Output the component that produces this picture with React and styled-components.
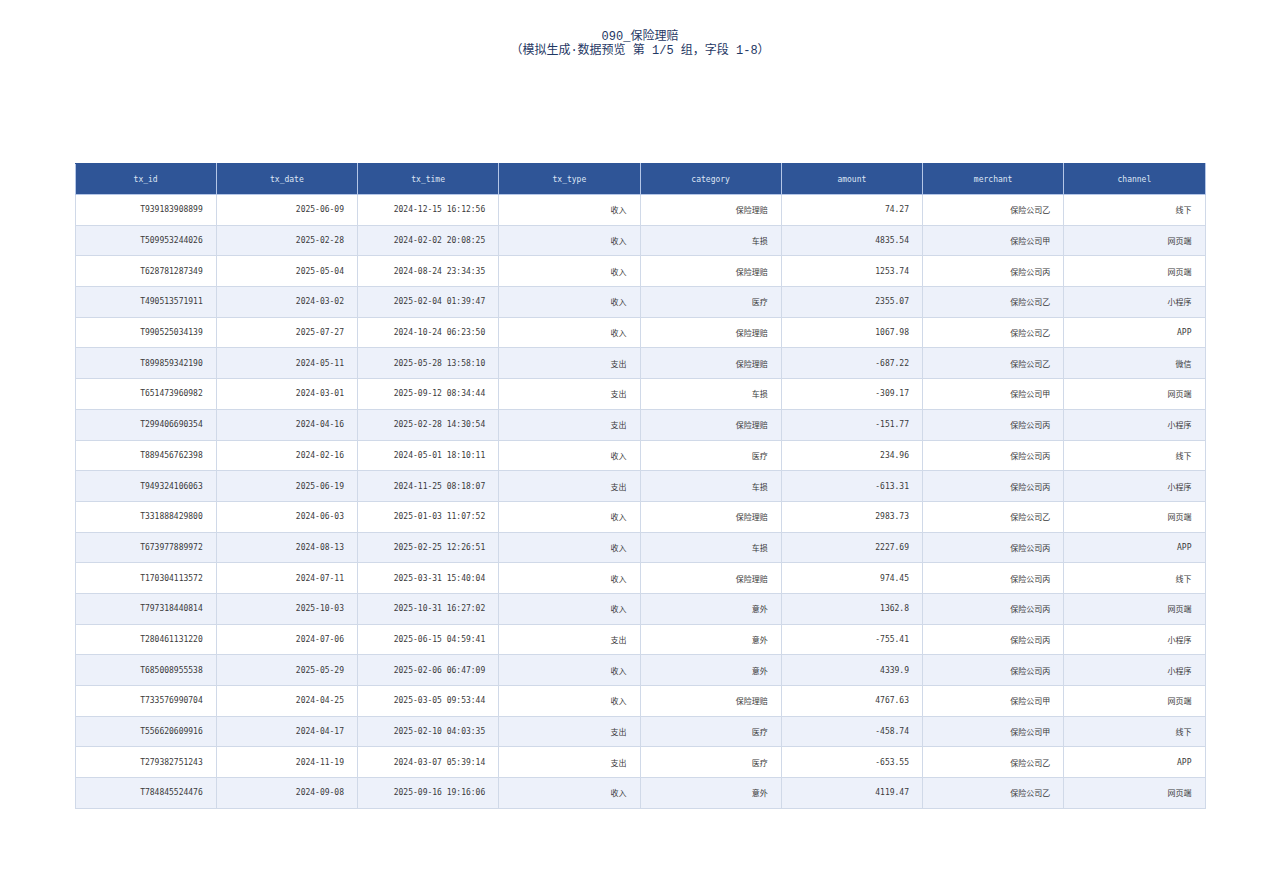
import React from "react";
import styled, { createGlobalStyle } from "styled-components";

const Global = createGlobalStyle`
  body {
    margin: 0;
    background: #ffffff;
    font-family: "DejaVu Sans Mono", "Noto Sans CJK SC", monospace;
  }
`;

const Page = styled.div`
  width: 1280px;
  height: 874px;
  padding: 30px 75px 0;
  box-sizing: border-box;
  display: flex;
  flex-direction: column;
  align-items: center;
`;

const Title = styled.div`
  color: #1f3864;
  font-size: 12px;
  line-height: 14px;
  text-align: center;
  font-family: "Liberation Mono", "Noto Sans CJK SC", monospace;
`;

const Table = styled.table`
  margin-top: 105px;
  width: 1131px;
  border-collapse: collapse;
  table-layout: fixed;
  font-size: 8px;
  color: #3a3a3a;
`;

const Th = styled.th`
  background: #2f5597;
  color: #dfe7f5;
  font-weight: normal;
  height: 30px;
  padding: 0;
  text-align: center;
  border: 1px solid #b4c6e7;
  border-top-color: #2f5597;
`;

const Tr = styled.tr`
  background: ${(p) => (p.$alt ? "#edf1fa" : "#ffffff")};
  height: 30.7px;
`;

const Td = styled.td`
  text-align: right;
  padding: 0 13px 0 0;
  border: 1px solid #d0d9e8;
`;

const cols = ["tx_id", "tx_date", "tx_time", "tx_type", "category", "amount", "merchant", "channel"];

const rows = [
  ["T939183908899", "2025-06-09", "2024-12-15 16:12:56", "收入", "保险理赔", "74.27", "保险公司乙", "线下"],
  ["T509953244026", "2025-02-28", "2024-02-02 20:08:25", "收入", "车损", "4835.54", "保险公司甲", "网页端"],
  ["T628781287349", "2025-05-04", "2024-08-24 23:34:35", "收入", "保险理赔", "1253.74", "保险公司丙", "网页端"],
  ["T490513571911", "2024-03-02", "2025-02-04 01:39:47", "收入", "医疗", "2355.07", "保险公司乙", "小程序"],
  ["T990525034139", "2025-07-27", "2024-10-24 06:23:50", "收入", "保险理赔", "1067.98", "保险公司乙", "APP"],
  ["T899859342190", "2024-05-11", "2025-05-28 13:58:10", "支出", "保险理赔", "-687.22", "保险公司乙", "微信"],
  ["T651473960982", "2024-03-01", "2025-09-12 08:34:44", "支出", "车损", "-309.17", "保险公司甲", "网页端"],
  ["T299406690354", "2024-04-16", "2025-02-28 14:30:54", "支出", "保险理赔", "-151.77", "保险公司丙", "小程序"],
  ["T889456762398", "2024-02-16", "2024-05-01 18:10:11", "收入", "医疗", "234.96", "保险公司丙", "线下"],
  ["T949324106063", "2025-06-19", "2024-11-25 08:18:07", "支出", "车损", "-613.31", "保险公司丙", "小程序"],
  ["T331888429800", "2024-06-03", "2025-01-03 11:07:52", "收入", "保险理赔", "2983.73", "保险公司乙", "网页端"],
  ["T673977889972", "2024-08-13", "2025-02-25 12:26:51", "收入", "车损", "2227.69", "保险公司丙", "APP"],
  ["T170304113572", "2024-07-11", "2025-03-31 15:40:04", "收入", "保险理赔", "974.45", "保险公司丙", "线下"],
  ["T797318440814", "2025-10-03", "2025-10-31 16:27:02", "收入", "意外", "1362.8", "保险公司丙", "网页端"],
  ["T280461131220", "2024-07-06", "2025-06-15 04:59:41", "支出", "意外", "-755.41", "保险公司丙", "小程序"],
  ["T685008955538", "2025-05-29", "2025-02-06 06:47:09", "收入", "意外", "4339.9", "保险公司丙", "小程序"],
  ["T733576990704", "2024-04-25", "2025-03-05 09:53:44", "收入", "保险理赔", "4767.63", "保险公司甲", "网页端"],
  ["T556620609916", "2024-04-17", "2025-02-10 04:03:35", "支出", "医疗", "-458.74", "保险公司甲", "线下"],
  ["T279382751243", "2024-11-19", "2024-03-07 05:39:14", "支出", "医疗", "-653.55", "保险公司乙", "APP"],
  ["T784845524476", "2024-09-08", "2025-09-16 19:16:06", "收入", "意外", "4119.47", "保险公司乙", "网页端"],
];

export default function App() {
  return (
    <>
      <Global />
      <Page>
        <Title>
          090_保险理赔
          <br />
          （模拟生成·数据预览 第 1/5 组，字段 1-8）
        </Title>
        <Table>
          <thead>
            <tr>
              {cols.map((c) => (
                <Th key={c}>{c}</Th>
              ))}
            </tr>
          </thead>
          <tbody>
            {rows.map((r, i) => (
              <Tr key={r[0]} $alt={i % 2 === 1}>
                {r.map((v, j) => (
                  <Td key={j}>{v}</Td>
                ))}
              </Tr>
            ))}
          </tbody>
        </Table>
      </Page>
    </>
  );
}
